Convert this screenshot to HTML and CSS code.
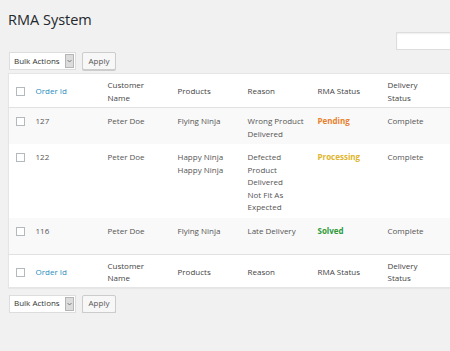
FILE: index.html
```html
<!DOCTYPE html>
<html lang="en">
<head>
  <meta charset="UTF-8" />
  <title>RMA System</title>
  <link rel="stylesheet" href="styles.css">
</head>
<body>
  <div class="wrap">
    <h1>RMA System</h1>

    <div class="search-row">
      <input type="text" class="search-input">
    </div>

    <div class="tablenav top">
      <div class="bulk-select">
        <span>Bulk Actions</span>
        <span class="arrow"><svg width="5" height="4" viewBox="0 0 5 4"><path d="M0.5 1 L2.5 3 L4.5 1" fill="none" stroke="#666" stroke-width="0.8"/></svg></span>
      </div>
      <button class="btn">Apply</button>
    </div>

    <table class="list">
      <colgroup>
        <col class="c-check"><col class="c-id"><col class="c-std"><col class="c-std"><col class="c-std"><col class="c-std"><col>
      </colgroup>
      <thead>
        <tr>
          <th class="check"><span class="cb"></span></th>
          <th><a href="#">Order Id</a></th>
          <th>Customer<br>Name</th>
          <th>Products</th>
          <th>Reason</th>
          <th>RMA Status</th>
          <th>Delivery<br>Status</th>
        </tr>
      </thead>
      <tbody>
        <tr class="alt">
          <td class="check"><span class="cb"></span></td>
          <td>127<div class="row-actions"></div></td>
          <td>Peter Doe</td>
          <td>Flying Ninja</td>
          <td>Wrong Product Delivered</td>
          <td><strong class="pending">Pending</strong></td>
          <td>Complete</td>
        </tr>
        <tr>
          <td class="check"><span class="cb"></span></td>
          <td>122<div class="row-actions"></div></td>
          <td>Peter Doe</td>
          <td>Happy Ninja<br>Happy Ninja</td>
          <td>Defected<br>Product<br>Delivered<br>Not Fit As<br>Expected</td>
          <td><strong class="processing">Processing</strong></td>
          <td>Complete</td>
        </tr>
        <tr class="alt">
          <td class="check"><span class="cb"></span></td>
          <td>116<div class="row-actions"></div></td>
          <td>Peter Doe</td>
          <td>Flying Ninja</td>
          <td>Late Delivery</td>
          <td><strong class="solved">Solved</strong></td>
          <td>Complete</td>
        </tr>
      </tbody>
      <tfoot>
        <tr>
          <th class="check"><span class="cb"></span></th>
          <th><a href="#">Order Id</a></th>
          <th>Customer<br>Name</th>
          <th>Products</th>
          <th>Reason</th>
          <th>RMA Status</th>
          <th>Delivery<br>Status</th>
        </tr>
      </tfoot>
    </table>

    <div class="tablenav bottom">
      <div class="bulk-select">
        <span>Bulk Actions</span>
        <span class="arrow"><svg width="5" height="4" viewBox="0 0 5 4"><path d="M0.5 1 L2.5 3 L4.5 1" fill="none" stroke="#666" stroke-width="0.8"/></svg></span>
      </div>
      <button class="btn">Apply</button>
    </div>
  </div>
</body>
</html>
```

FILE: styles.css
```css
*{margin:0;padding:0;box-sizing:border-box}
html,body{overflow:hidden}
body{background:#f1f1f1;color:#555;font-family:"Open Sans","Noto Sans",sans-serif;font-size:8px;line-height:12.5px}
.wrap{width:462px;margin-left:8px;padding-top:10px}
h1{font-size:14.5px;font-weight:400;line-height:20px;color:#23282d}
.search-row{display:flex;justify-content:flex-end;margin-top:2px}
.search-input{width:74px;height:18px;border:1px solid #ddd;background:#fff;box-shadow:inset 0 1px 2px rgba(0,0,0,0.07)}
.tablenav{display:flex;align-items:center;gap:6px;height:18px}
.tablenav.top{margin-top:2px;margin-bottom:3px}
.tablenav.bottom{margin-top:7px}
.bulk-select{display:flex;align-items:center;justify-content:space-between;width:67px;height:18px;margin-left:1px;padding:0 1px 0 4px;background:#fff;border:1px solid #ddd;color:#333}
.bulk-select .arrow{display:flex;align-items:center;justify-content:center;width:9px;height:14px;background:#dcdcdc;border:1px solid #b5b5b5}
.btn{width:34px;height:18px;font:inherit;color:#555;background:#f7f7f7;border:1px solid #ccc;border-radius:2px;box-shadow:0 1px 0 #ccc}
.list{width:100%;table-layout:fixed;border-collapse:collapse;background:#fff;border:1px solid #e5e5e5;box-shadow:0 1px 1px rgba(0,0,0,0.04)}
.c-check{width:20px}
.c-id{width:72px}
.c-std{width:70px}
th{font-weight:400;text-align:left;color:#444;vertical-align:middle;padding:5px 3px 3px 7px}
thead th{border-bottom:1px solid #e1e1e1}
tfoot th{border-top:1px solid #e1e1e1;padding:5px 3px 2px 7px}
td{vertical-align:top;padding:7px 3px 4px 7px}
tr.alt td{background:#f9f9f9}
.check{padding-left:7px;padding-right:0}
.cb{display:block;width:9px;height:9px;border:1px solid #b4b9be;background:#fff}
td.check .cb{margin-top:2px}
.row-actions{height:12.5px}
a{color:#1e8cbe;text-decoration:none}
.pending{color:#e8812f}
.processing{color:#dfb52c}
.solved{color:#2e9b3b}
strong{font-weight:700}
```
